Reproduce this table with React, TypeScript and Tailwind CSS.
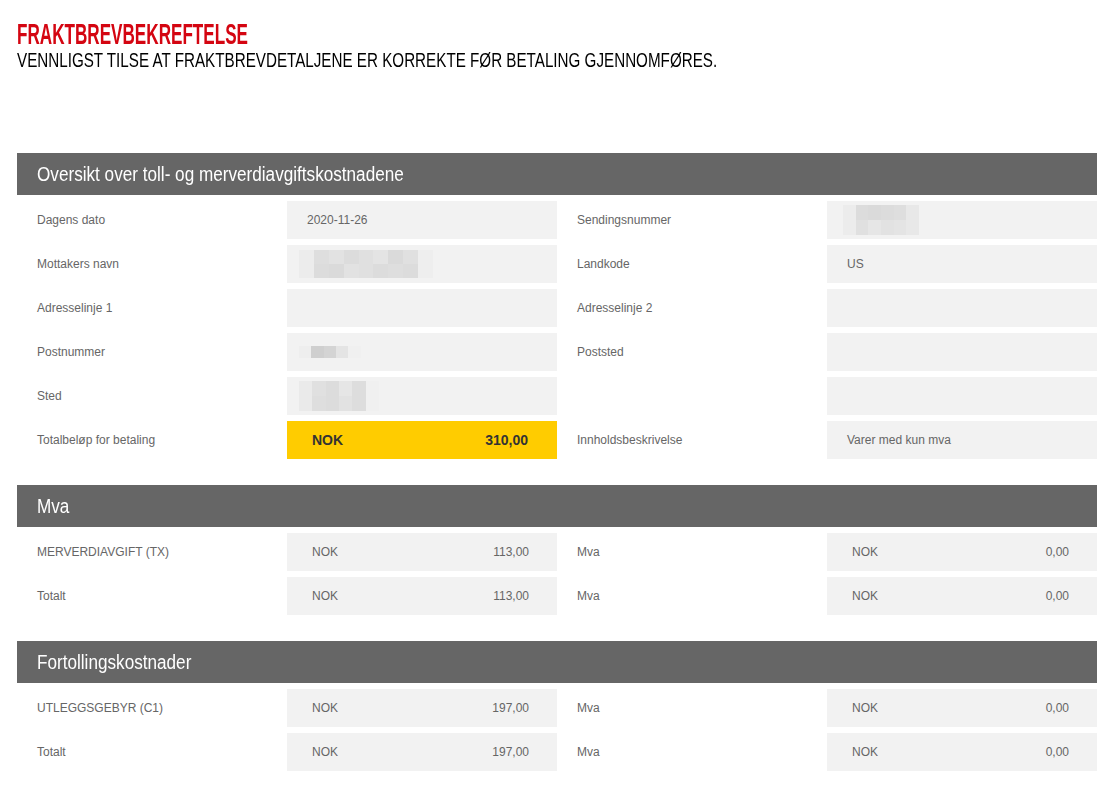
import React from "react";

const Blur = ({ w, h, cells }: { w: number; h: number; cells: string[][] }) => (
  <div
    className="flex flex-col overflow-hidden blur-[0.6px]"
    style={{ width: w, height: h }}
  >
    {cells.map((row, i) => (
      <div key={i} className="flex flex-1">
        {row.map((c, j) => (
          <div key={j} className="flex-1" style={{ backgroundColor: c }} />
        ))}
      </div>
    ))}
  </div>
);

const SectionHeader = ({ title }: { title: string }) => (
  <div className="flex h-[42px] items-center bg-[#666666] px-5">
    <h2 className="inline-block origin-left scale-x-[0.857] whitespace-nowrap text-[20px] leading-none text-white">
      {title}
    </h2>
  </div>
);

const Label = ({ children }: { children?: React.ReactNode }) => (
  <div className="flex h-[38px] items-center pl-5 text-xs text-[#666666]">
    {children}
  </div>
);

const Value = ({ children }: { children?: React.ReactNode }) => (
  <div className="flex h-[38px] items-center bg-[#f2f2f2] pl-5 text-xs text-[#666666]">
    {children}
  </div>
);

const Money = ({ amount }: { amount: string }) => (
  <div className="flex h-[38px] items-center justify-between bg-[#f2f2f2] pl-[25px] pr-7 text-xs text-[#666666]">
    <span>NOK</span>
    <span>{amount}</span>
  </div>
);

const Row = ({ children }: { children: React.ReactNode }) => (
  <div className="mt-[6px] grid grid-cols-4">{children}</div>
);

export default function App() {
  return (
    <div
      className="min-h-screen bg-white px-[17px] pt-[19px]"
      style={{ fontFamily: '"Liberation Sans", Arial, sans-serif' }}
    >
      <h1 className="inline-block origin-left scale-x-[0.59] whitespace-nowrap text-[29px] font-bold leading-[30px] text-[#d40511]">
        FRAKTBREVBEKREFTELSE
      </h1>
      <div className="leading-[18px]">
        <p className="inline-block origin-left scale-x-[0.76] whitespace-nowrap text-[20px] leading-[18px] text-black">
          VENNLIGST TILSE AT FRAKTBREVDETALJENE ER KORREKTE FØR BETALING GJENNOMFØRES.
        </p>
      </div>

      <div className="mt-[82px] w-[1080px]">
        <SectionHeader title="Oversikt over toll- og merverdiavgiftskostnadene" />
        <Row>
          <Label>Dagens dato</Label>
          <Value>2020-11-26</Value>
          <Label>Sendingsnummer</Label>
          <div className="flex h-[38px] items-center bg-[#f2f2f2] pl-4">
            <Blur
              w={76}
              h={30}
              cells={[
                ["#ececec", "#dcdcdc", "#dadada", "#dcdcdc", "#dedede", "#e8e8e8"],
                ["#ececec", "#e0e0e0", "#e6e6e6", "#e2e2e2", "#e4e4e4", "#e8e8e8"],
              ]}
            />
          </div>
        </Row>
        <Row>
          <Label>Mottakers navn</Label>
          <div className="flex h-[38px] items-center bg-[#f2f2f2] pl-3">
            <Blur
              w={134}
              h={28}
              cells={[
                ["#ececec", "#dedede", "#e2e2e2", "#dcdcdc", "#e0e0e0", "#e4e4e4", "#dadada", "#e0e0e0", "#eeeeee"],
                ["#ececec", "#dcdcdc", "#dadada", "#e2e2e2", "#e0e0e0", "#dcdcdc", "#dedede", "#dcdcdc", "#eeeeee"],
              ]}
            />
          </div>
          <Label>Landkode</Label>
          <Value>US</Value>
        </Row>
        <Row>
          <Label>Adresselinje 1</Label>
          <Value />
          <Label>Adresselinje 2</Label>
          <Value />
        </Row>
        <Row>
          <Label>Postnummer</Label>
          <div className="flex h-[38px] items-center bg-[#f2f2f2] pl-3">
            <Blur
              w={74}
              h={12}
              cells={[["#eeeeee", "#cfcfcf", "#d4d4d4", "#e4e4e4", "#f0f0f0", "#f2f2f2"]]}
            />
          </div>
          <Label>Poststed</Label>
          <Value />
        </Row>
        <Row>
          <Label>Sted</Label>
          <div className="flex h-[38px] items-center bg-[#f2f2f2] pl-3">
            <Blur
              w={80}
              h={30}
              cells={[
                ["#eaeaea", "#e0e0e0", "#dcdcdc", "#e6e6e6", "#dddddd", "#f0f0f0"],
                ["#eaeaea", "#dedede", "#dcdcdc", "#e2e2e2", "#dddddd", "#f0f0f0"],
              ]}
            />
          </div>
          <Label />
          <Value />
        </Row>
        <Row>
          <Label>Totalbeløp for betaling</Label>
          <div className="flex h-[38px] items-center justify-between bg-[#ffcc00] pl-[25px] pr-[29px] text-sm font-bold text-[#333333]">
            <span>NOK</span>
            <span>310,00</span>
          </div>
          <Label>Innholdsbeskrivelse</Label>
          <Value>Varer med kun mva</Value>
        </Row>

        <div className="mt-[26px]">
          <SectionHeader title="Mva" />
          <Row>
            <Label>MERVERDIAVGIFT (TX)</Label>
            <Money amount="113,00" />
            <Label>Mva</Label>
            <Money amount="0,00" />
          </Row>
          <Row>
            <Label>Totalt</Label>
            <Money amount="113,00" />
            <Label>Mva</Label>
            <Money amount="0,00" />
          </Row>
        </div>

        <div className="mt-[26px]">
          <SectionHeader title="Fortollingskostnader" />
          <Row>
            <Label>UTLEGGSGEBYR (C1)</Label>
            <Money amount="197,00" />
            <Label>Mva</Label>
            <Money amount="0,00" />
          </Row>
          <Row>
            <Label>Totalt</Label>
            <Money amount="197,00" />
            <Label>Mva</Label>
            <Money amount="0,00" />
          </Row>
        </div>
      </div>
    </div>
  );
}
